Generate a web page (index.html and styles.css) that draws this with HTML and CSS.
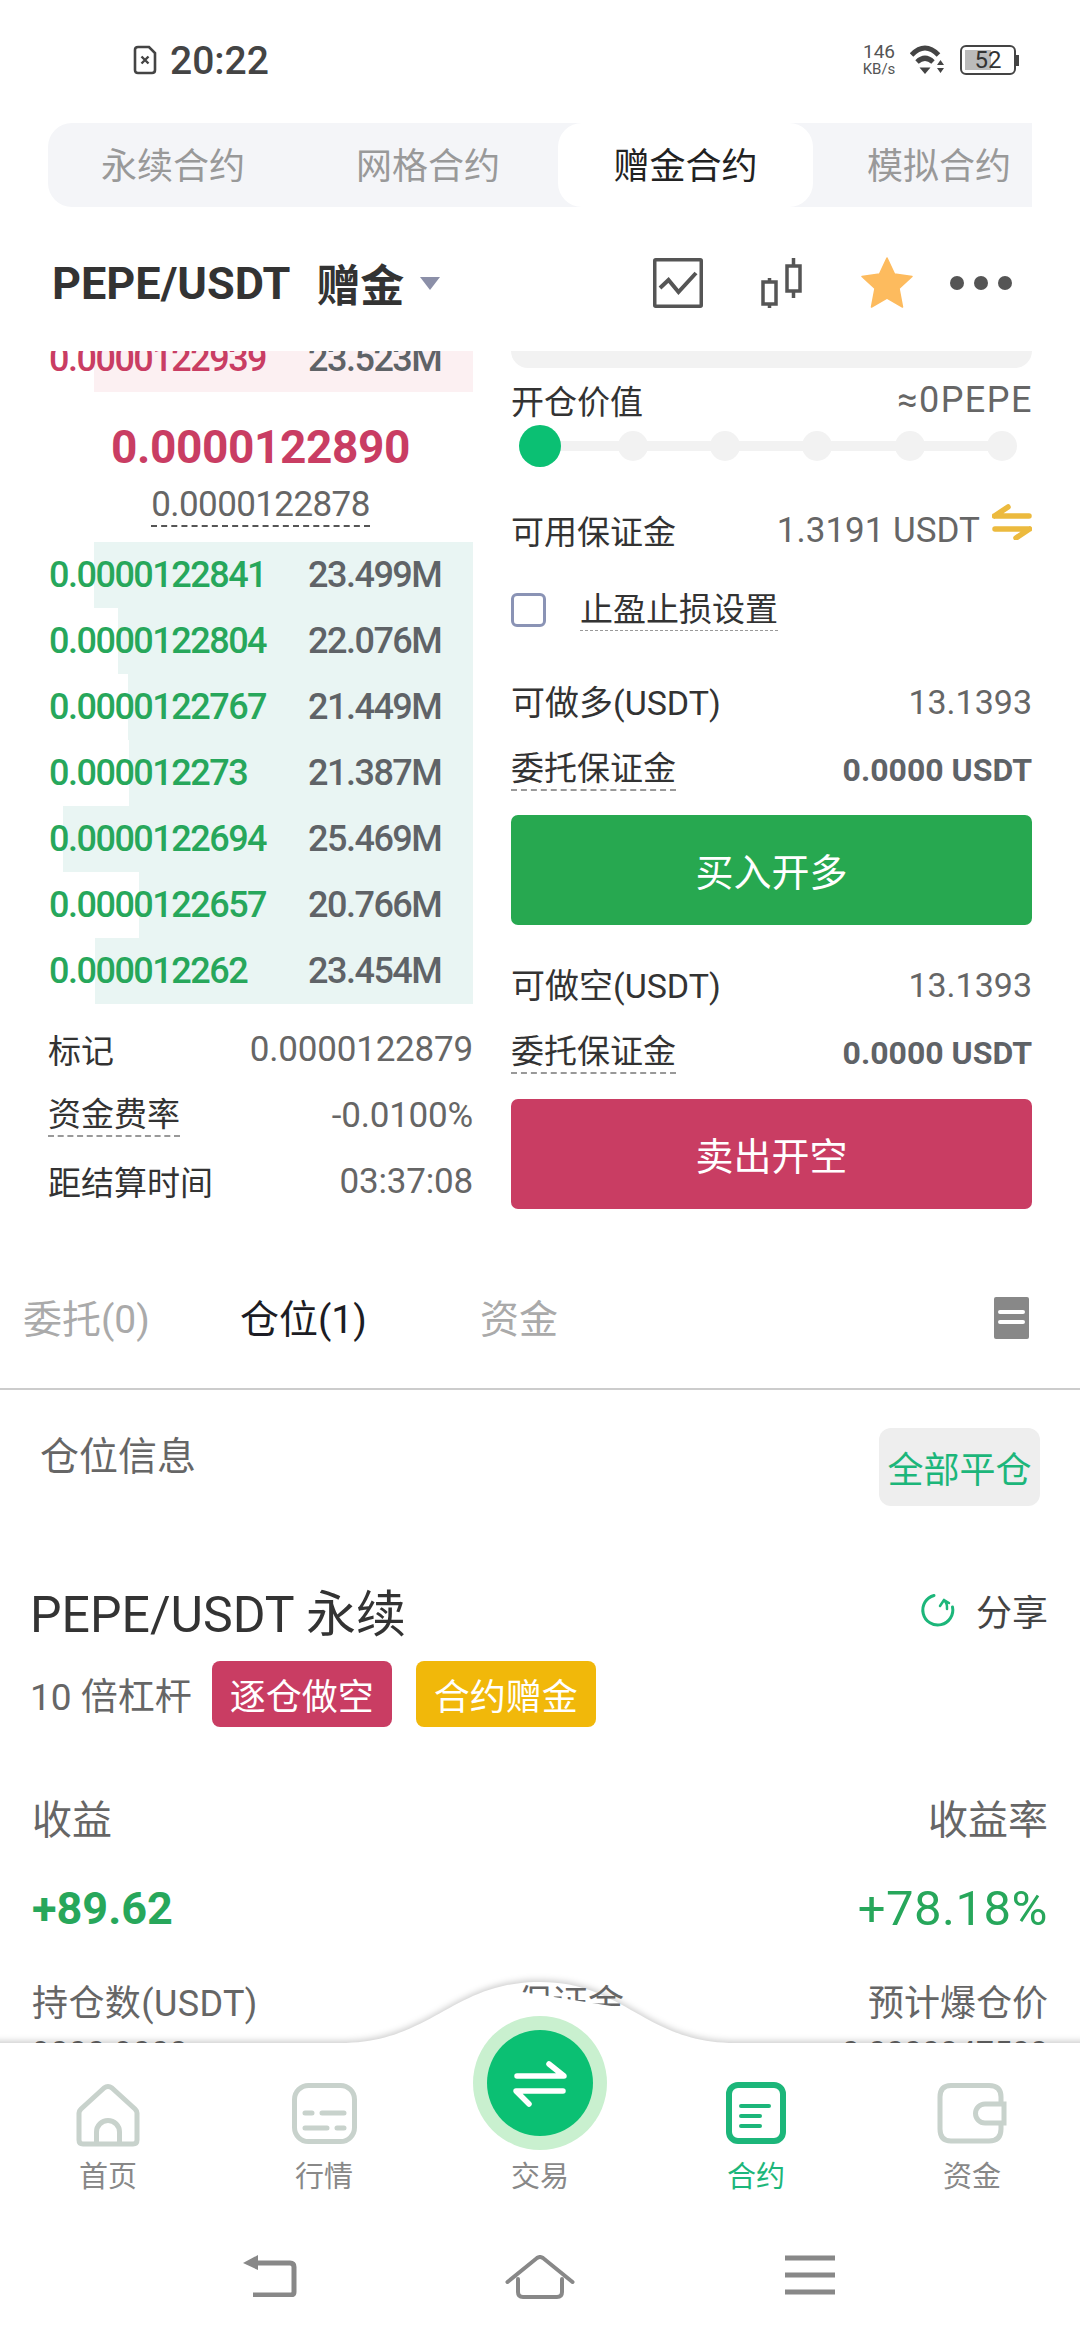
FILE: index.html
```html
<!DOCTYPE html>
<html lang="zh">
<head>
<meta charset="utf-8">
<title>PEPE/USDT 赠金</title>
<link rel="stylesheet" href="styles.css">
</head>
<body>
<div class="page">
  <div class="status">
    <svg class="sim" width="24" height="30" viewBox="0 0 24 30"><path d="M2 5 Q2 2 5 2 H16 L22 8 V25 Q22 28 19 28 H5 Q2 28 2 25Z" fill="none" stroke="#444" stroke-width="2.6"/><path d="M8.5 11.5 L15.5 18.5 M15.5 11.5 L8.5 18.5" stroke="#444" stroke-width="2.4"/></svg>
    <span class="time">20:22</span>
    <div class="status-right">
      <div class="speed"><span class="speed-num">146</span><span class="speed-unit">KB/s</span></div>
      <svg class="wifi" width="36" height="30" viewBox="0 0 36 30"><path d="M1.500 10 Q15 -4 28.500 10" fill="none" stroke="#444" stroke-width="5"/><path d="M7 17 Q15 9.500 23 17" fill="none" stroke="#444" stroke-width="5"/><path d="M9.500 22.500 H20.500 L15 29Z" fill="#444"/><path d="M30.500 15 L34 20 H27Z M30.500 28 L34 23 H27Z" fill="#444"/></svg>
      <div class="battery"><div class="battery-fill"></div><span class="battery-num">52</span></div>
      <div class="battery-tip"></div>
    </div>
  </div>

  <div class="tabs">
    <div class="tab">永续合约</div>
    <div class="tab">网格合约</div>
    <div class="tab active">赠金合约</div>
    <div class="tab">模拟合约</div>
  </div>

  <div class="header">
    <span class="pair">PEPE/USDT</span>
    <span class="pair-tag">赠金</span>
    <span class="caret"></span>
    <div class="header-icons">
      <svg width="50" height="50" viewBox="0 0 50 50"><rect x="1.750" y="1.750" width="46.500" height="46.500" fill="none" stroke="#555" stroke-width="3.500" rx="1"/><path d="M7 30 L15.500 22 L25.500 34 L43 15" fill="none" stroke="#555" stroke-width="4"/></svg>
      <svg width="42" height="50" viewBox="0 0 42 50"><g fill="none" stroke="#555" stroke-width="3.500"><rect x="2" y="24" width="13" height="22"/><rect x="26" y="8" width="13" height="25"/><path d="M8.500 20 V24 M8.500 46 V50 M32.500 0 V8 M32.500 33 V40"/></g></svg>
      <svg width="52" height="52" viewBox="0 0 52 52"><path d="M26 1 L33.500 17 L51 19.500 L38 31.500 L41.500 50 L26 41 L10.500 50 L14 31.500 L1 19.500 L18.500 17Z" fill="#fdbb5e" stroke="#fdbb5e" stroke-width="1.500" stroke-linejoin="round"/></svg>
      <div class="dots"><i></i><i></i><i></i></div>
    </div>
  </div>

  <div class="trade">
    <div class="book">
      <div class="ask-row row">
        <div class="bar ask-bar"></div>
        <span class="price ask">0.0000122939</span><span class="vol">23.523M</span>
      </div>
      <div class="mid">
        <div class="mid-price">0.0000122890</div>
        <div class="mark-price">0.0000122878</div>
      </div>
      <div class="row"><div class="bar" style="width:379px"></div><span class="price">0.0000122841</span><span class="vol">23.499M</span></div>
      <div class="row"><div class="bar" style="width:355px"></div><span class="price">0.0000122804</span><span class="vol">22.076M</span></div>
      <div class="row"><div class="bar" style="width:345px"></div><span class="price">0.0000122767</span><span class="vol">21.449M</span></div>
      <div class="row"><div class="bar" style="width:344px"></div><span class="price">0.000012273</span><span class="vol">21.387M</span></div>
      <div class="row"><div class="bar" style="width:410px"></div><span class="price">0.0000122694</span><span class="vol">25.469M</span></div>
      <div class="row"><div class="bar" style="width:334px"></div><span class="price">0.0000122657</span><span class="vol">20.766M</span></div>
      <div class="row"><div class="bar" style="width:378px"></div><span class="price">0.000012262</span><span class="vol">23.454M</span></div>
      <div class="info first"><span>标记</span><span class="info-val">0.0000122879</span></div>
      <div class="info"><span class="dashed">资金费率</span><span class="info-val">-0.0100%</span></div>
      <div class="info"><span>距结算时间</span><span class="info-val">03:37:08</span></div>
    </div>

    <div class="order">
      <div class="input-stub"></div>
      <div class="line open-value"><span>开仓价值</span><span class="soft wide">≈0PEPE</span></div>
      <div class="slider">
        <div class="track"></div>
        <i class="knob"></i><i class="stop"></i><i class="stop"></i><i class="stop"></i><i class="stop"></i><i class="stop"></i>
      </div>
      <div class="line margin-line"><span>可用保证金</span>
        <span class="margin-val"><span class="soft">1.3191 USDT</span>
          <svg width="40" height="36" viewBox="0 0 40 36"><path d="M2.500 12 H37 M2.500 12 L16 3 M37.500 25 H3 M37.500 25 L24 34" fill="none" stroke="#ecba3e" stroke-width="5.500" stroke-linecap="round"/></svg>
        </span>
      </div>
      <div class="check-line"><span class="checkbox"></span><span class="dashed thin">止盈止损设置</span></div>
      <div class="line long-line"><span class="latin">可做多(USDT)</span><span class="soft avail">13.1393</span></div>
      <div class="line entrust"><span class="dashed">委托保证金</span><span class="strong">0.0000 USDT</span></div>
      <div class="btn buy">买入开多</div>
      <div class="line short-line"><span class="latin">可做空(USDT)</span><span class="soft avail">13.1393</span></div>
      <div class="line entrust"><span class="dashed">委托保证金</span><span class="strong">0.0000 USDT</span></div>
      <div class="btn sell">卖出开空</div>
    </div>
  </div>

  <div class="subtabs">
    <span class="subtab">委托(0)</span>
    <span class="subtab on">仓位(1)</span>
    <span class="subtab">资金</span>
    <svg class="doc" width="35" height="42" viewBox="0 0 35 42"><rect width="35" height="42" rx="2" fill="#888"/><path d="M6 15 H29 M6 25 H29" stroke="#fff" stroke-width="4" stroke-linecap="round"/></svg>
  </div>

  <div class="pos-head"><span class="pos-title">仓位信息</span><span class="close-all">全部平仓</span></div>

  <div class="card">
    <div class="card-title"><span class="symbol">PEPE/USDT 永续</span>
      <span class="share">
        <svg width="36" height="36" viewBox="0 0 36 36"><path d="M14 3.500 A15 15 0 1 0 32.500 15" fill="none" stroke="#1cb67a" stroke-width="3" stroke-linecap="round"/><path d="M24 8 A11 11 0 0 1 27 17 M24 8 L20 14 M24 8 L29 11" fill="none" stroke="#1cb67a" stroke-width="2.500" stroke-linecap="round"/></svg>
        <span>分享</span>
      </span>
    </div>
    <div class="tags"><span class="lev">10 倍杠杆</span><span class="tag red">逐仓做空</span><span class="tag gold">合约赠金</span></div>
    <div class="stat-head"><span>收益</span><span>收益率</span></div>
    <div class="stat-val"><span class="pnl">+89.62</span><span class="rate">+78.18%</span></div>
    <div class="cols"><span>持仓数(USDT)</span><span class="peek">保证金</span><span>预计爆仓价</span></div>
    <div class="cols vals"><span>9000.9000</span><span>1.1465</span><span>0.0000047500</span></div>
  </div>

  <div class="nav">
    <svg class="nav-bg" width="1080" height="365" viewBox="0 0 1080 365"><path d="M-20 68 H340 C432 68 452 7 540 7 C625 7 645 68 735 68 H1100 V385 H-20Z" fill="#fff"/></svg>
    <div class="nav-items">
      <div class="nav-item">
        <svg width="70" height="66" viewBox="0 0 70 66"><g fill="none" stroke="#c8d2cc" stroke-width="5" stroke-linejoin="round"><path d="M6 31 Q6 29 8 27 L31 6 Q35 3 39 6 L62 27 Q64 29 64 31 V58 Q64 62 60 62 H10 Q6 62 6 58Z"/><path d="M23.500 62 V50 A11.500 11.500 0 0 1 46.500 50 V62"/></g></svg>
        <span>首页</span>
      </div>
      <div class="nav-item">
        <svg width="66" height="66" viewBox="0 0 66 66"><rect x="3.500" y="3.500" width="60" height="56" rx="14" fill="none" stroke="#c8d2cc" stroke-width="5"/><path d="M14 31 H21 M31 31 H53 M14 46 H36 M46 46 H53" stroke="#c8d2cc" stroke-width="5" stroke-linecap="round"/></svg>
        <span>行情</span>
      </div>
      <div class="nav-item">
        <div class="ring"><div class="ring-core"><svg width="60" height="52" viewBox="0 0 60 52"><path d="M7 19 H54 L39 7 M53 34 H6 L19 47" fill="none" stroke="#fff" stroke-width="5.500" stroke-linecap="round" stroke-linejoin="round"/></svg></div></div>
        <div class="ring-space"></div>
        <span>交易</span>
      </div>
      <div class="nav-item on">
        <svg width="60" height="66" viewBox="0 0 60 66"><rect x="3" y="3" width="54" height="56" rx="9" fill="none" stroke="#1cb67a" stroke-width="6"/><path d="M15 24 H43 M15 34 H34 M15 44 H34" stroke="#1cb67a" stroke-width="4" stroke-linecap="round"/></svg>
        <span>合约</span>
      </div>
      <div class="nav-item">
        <svg width="70" height="66" viewBox="0 0 70 66"><g fill="none" stroke="#c8d2cc" stroke-width="5"><path d="M64 22 V15 Q64 3.500 52 3.500 H14 Q3 3.500 3 15 V47 Q3 59 14 59 H52 Q64 59 64 47 V41"/><path d="M67 22 H48 A9.500 9.500 0 0 0 48 41 H67Z"/></g></svg>
        <span>资金</span>
      </div>
    </div>
    <div class="gestures">
      <div class="gesture"><svg width="54" height="42" viewBox="0 0 54 42"><path d="M8 8 H47 Q51 8 51 12 V37 Q51 40 47 40 H10" fill="none" stroke="#888" stroke-width="5"/><path d="M0 8 L15 0 V15Z" fill="#888"/></svg></div>
      <div class="gesture"><svg width="70" height="44" viewBox="0 0 70 44"><path d="M2.500 27 L32 3 Q35 1 38 3 L67.500 27 M13 24 V37 Q13 42 18 42 H52 Q57 42 57 37 V24" fill="none" stroke="#888" stroke-width="4" stroke-linecap="round"/></svg></div>
      <div class="gesture"><svg width="50" height="40" viewBox="0 0 50 40"><path d="M0 3 H50 M0 20 H50 M0 37 H50" stroke="#888" stroke-width="5"/></svg></div>
    </div>
  </div>
</div>
</body>
</html>
```
FILE: styles.css
```css
* { box-sizing: border-box; }
html, body { margin: 0; padding: 0; background: #fff; }
body { font-family: Roboto, "Noto Sans CJK SC", sans-serif; color: #333; }
.page { position: relative; width: 1080px; height: 2340px; overflow: hidden; background: #fff; }

/* status bar */
.status { display: flex; align-items: center; height: 123px; padding: 0 61px 3px 133px; }
.time { margin: 2px 0 0 13px; font-size: 39px; font-weight: 500; color: #444; }
.status-right { display: flex; align-items: center; margin-left: auto; }
.speed { display: flex; flex-direction: column; align-items: center; width: 36px; color: #555; }
.speed-num { font-size: 19px; line-height: 18px; }
.speed-unit { font-size: 15px; line-height: 16px; }
.wifi { margin-left: 13px; }
.battery { position: relative; width: 56px; height: 30px; margin-left: 14px; border: 2.5px solid #444; border-radius: 6px; display: flex; align-items: center; justify-content: center; }
.battery-fill { position: absolute; left: 3px; top: 3px; bottom: 3px; width: 26px; background: #bbb; }
.battery-num { position: relative; font-size: 24px; line-height: 1; color: #333; }
.battery-tip { width: 3px; height: 11px; background: #444; }

/* product tabs */
.tabs { display: grid; grid-template-columns: 250px 260px 255px 252px; height: 84px; margin: 0 48px; background: #f4f5f8; border-radius: 24px 0 0 24px; overflow: hidden; }
.tab { display: flex; align-items: center; justify-content: center; padding-bottom: 5px; font-size: 36px; color: #999; white-space: nowrap; }
.tab.active { background: #fff; color: #222; border-radius: 24px; }

/* pair header */
.header { display: flex; align-items: center; height: 144px; padding: 8px 65px 0 52px; }
.pair { font-size: 45px; font-weight: 700; color: #333; }
.pair-tag { margin-left: 26px; font-size: 44px; font-weight: 700; color: #333; }
.caret { width: 0; height: 0; margin-left: 16px; border-left: 10.500px solid transparent; border-right: 10.500px solid transparent; border-top: 13px solid #8b8fa8; }
.header-icons { display: flex; align-items: center; gap: 58px; margin-left: auto; }
.dots { display: flex; gap: 10px; margin: 0 3px 0 -21px; }
.dots i { width: 14px; height: 14px; border-radius: 50%; background: #555; }

/* trade split */
.trade { display: flex; height: 880px; padding: 0 48px; overflow: hidden; }
.book { width: 425px; flex: none; overflow: hidden; }
.order { width: 521px; flex: none; margin-left: 38px; }

.row { position: relative; display: grid; grid-template-columns: 259px 1fr; align-items: center; height: 66px; padding-left: 1px; }
.ask-row { margin-top: -25px; }
.bar { position: absolute; right: 0; top: 0; bottom: 0; background: #e9f5f3; }
.ask-bar { width: 379px; background: #fcf0f2; }
.price, .vol { position: relative; font-size: 36px; font-weight: 500; letter-spacing: -1.5px; white-space: nowrap; }
.price { color: #27a75b; }
.price.ask { color: #c93d63; }
.vol { color: #5f6367; }

.mid { display: flex; flex-direction: column; align-items: center; height: 150px; padding-top: 28px; }
.mid-price { font-size: 46px; line-height: 54px; font-weight: 700; letter-spacing: -.4px; color: #c93d63; }
.mark-price { margin-top: 11px; font-size: 35px; line-height: 40px; letter-spacing: -.6px; color: #666; border-bottom: 2px dashed #555; }

.info { display: flex; justify-content: space-between; align-items: center; height: 66px; font-size: 33px; color: #333; }
.info.first { margin-top: 12px; }
.info .dashed { margin-top: 2px; }
.info-val { font-size: 35px; letter-spacing: -.2px; color: #666; }
.dashed { border-bottom: 2px dashed #999; line-height: 40px; }

/* order form */
.input-stub { height: 17px; background: #f2f2f2; border-radius: 0 0 28px 28px; }
.line { display: flex; justify-content: space-between; align-items: center; font-size: 33px; color: #333; }
.latin { font-size: 34px; }
.soft { font-size: 35px; color: #666; }
.avail { margin-top: 4px; font-size: 34px; }
.wide { font-size: 36px; letter-spacing: 1.5px; margin-right: -1px; }
.strong { font-size: 32px; font-weight: 700; color: #5f6367; }
.open-value { height: 48px; margin-top: 8px; }

.slider { position: relative; display: grid; grid-template-columns: repeat(6, 92.4px); justify-items: center; align-items: center; height: 42px; margin: 1px 0 0 -17px; }
.track { position: absolute; left: 46px; width: 462px; top: 16px; height: 10px; background: #f2f2f2; }
.slider i { position: relative; border-radius: 50%; }
.knob { width: 42px; height: 42px; background: #0bc073; }
.stop { width: 30px; height: 30px; background: #f2f2f2; }

.margin-line { height: 60px; margin-top: 33px; }
.margin-val { display: flex; align-items: center; gap: 12px; }
.margin-val svg { margin: -16px 0 0; }

.check-line { display: flex; align-items: center; gap: 34px; height: 40px; margin-top: 30px; font-size: 33px; }
.checkbox { width: 35px; height: 34px; border: 3px solid #8a93b5; border-radius: 6px; }
.thin { border-bottom-width: 1.500px; }

.long-line { height: 60px; margin-top: 40px; }
.entrust { height: 42px; margin-top: 19px; }
.btn { display: flex; align-items: center; justify-content: center; height: 110px; padding-bottom: 2px; border-radius: 7px; font-size: 38px; color: #fff; }
.buy { margin-top: 24px; background: #27a850; }
.short-line { height: 60px; margin-top: 28px; }
.sell { margin-top: 25px; background: #c93d63; }

/* sub tabs */
.subtabs { position: relative; display: grid; grid-template-columns: 217px 240px 1fr auto; height: 159px; padding: 64px 51px 0 23px; border-bottom: 2px solid #ccc; }
.subtab { font-size: 39px; line-height: 50px; color: #aaa; }
.subtab.on { color: #1c1c24; }
.doc { margin-top: 2px; }

.pos-head { display: flex; justify-content: space-between; align-items: flex-start; padding: 38px 40px 0; }
.pos-title { margin-top: 4px; font-size: 39px; line-height: 50px; color: #666; }
.close-all { display: flex; align-items: center; justify-content: center; width: 161px; height: 78px; background: #eee; border-radius: 12px; font-size: 36px; color: #1cb67a; }

.card { padding: 0 32px; }
.card-title { display: flex; justify-content: space-between; align-items: center; height: 60px; margin-top: 74px; }
.symbol { margin-left: -2px; font-size: 50px; color: #333; }
.share { display: flex; align-items: center; gap: 20px; font-size: 36px; color: #444; }
.tags { display: flex; align-items: center; gap: 24px; height: 66px; margin-top: 21px; }
.lev { margin: 0 -4px 0 -2px; font-size: 37px; color: #666; }
.tag { display: flex; align-items: center; justify-content: center; width: 180px; height: 66px; border-radius: 8px; font-size: 36px; color: #fff; }
.tag.red { background: #c93d63; }
.tag.gold { background: #f1b80a; }
.stat-head { display: flex; justify-content: space-between; align-items: center; height: 60px; margin-top: 60px; font-size: 40px; color: #666; }
.stat-val { display: flex; justify-content: space-between; align-items: center; height: 60px; margin-top: 31px; color: #27a75b; }
.pnl { font-size: 45px; font-weight: 700; }
.rate { font-size: 49px; letter-spacing: .5px; }
.cols { display: flex; justify-content: space-between; align-items: center; height: 60px; margin-top: 32px; font-size: 36px; color: #666; }
.cols span:first-child { letter-spacing: .4px; }
.cols span:nth-child(2) { margin-left: 14px; }
.peek { position: relative; z-index: 2; clip-path: polygon(0 0, 100% 0, 100% 34px, 0 17px); }
.cols.vals { height: 44px; margin-top: 0; font-size: 32px; }

/* bottom nav overlay */
.nav { position: absolute; left: 0; right: 0; bottom: 0; height: 365px; }
.nav-bg { position: absolute; left: 0; top: 0; overflow: visible; filter: drop-shadow(0 -2px 3px rgba(0, 0, 0, .2)); }
.nav-items { position: relative; display: grid; grid-template-columns: repeat(5, 216px); padding-top: 107px; }
.nav-item { position: relative; display: flex; flex-direction: column; align-items: center; font-size: 29px; line-height: 40px; color: #888; }
.nav-item svg { display: block; }
.nav-item span { margin-top: 9px; }
.nav-item.on { color: #1cb67a; }
.ring-space { height: 66px; }
.ring { position: absolute; left: 41px; top: -66px; display: flex; align-items: center; justify-content: center; width: 134px; height: 134px; border-radius: 50%; background: #c9f0cf; }
.ring-core { display: flex; align-items: center; justify-content: center; width: 106px; height: 106px; border-radius: 50%; background: #0bc073; }
.gestures { position: relative; display: grid; grid-template-columns: repeat(3, 270px); padding: 0 135px; margin-top: 58px; }
.gesture { display: flex; justify-content: center; }
```
